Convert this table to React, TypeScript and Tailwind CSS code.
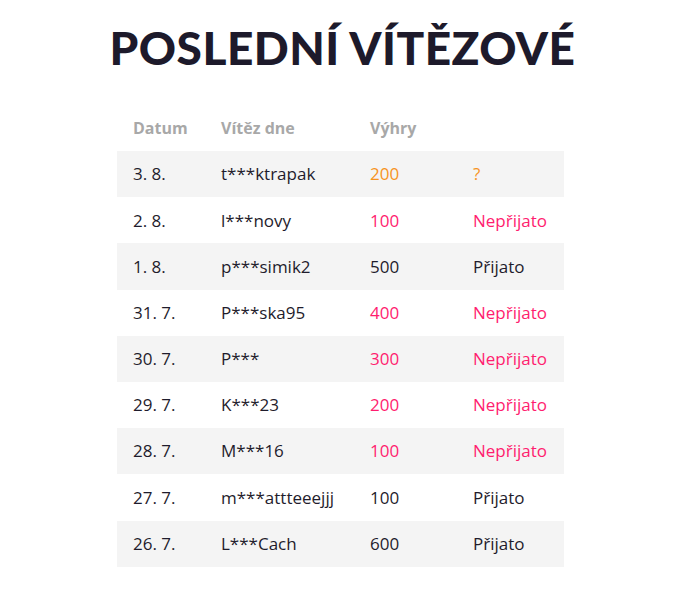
const rows = [
  { date: "3. 8.", name: "t***ktrapak", win: "200", status: "?", tone: "orange" },
  { date: "2. 8.", name: "l***novy", win: "100", status: "Nepřijato", tone: "pink" },
  { date: "1. 8.", name: "p***simik2", win: "500", status: "Přijato", tone: "dark" },
  { date: "31. 7.", name: "P***ska95", win: "400", status: "Nepřijato", tone: "pink" },
  { date: "30. 7.", name: "P***", win: "300", status: "Nepřijato", tone: "pink" },
  { date: "29. 7.", name: "K***23", win: "200", status: "Nepřijato", tone: "pink" },
  { date: "28. 7.", name: "M***16", win: "100", status: "Nepřijato", tone: "pink" },
  { date: "27. 7.", name: "m***attteeejjj", win: "100", status: "Přijato", tone: "dark" },
  { date: "26. 7.", name: "L***Cach", win: "600", status: "Přijato", tone: "dark" },
];

const toneClass: Record<string, string> = {
  orange: "text-[#f7931e]",
  pink: "text-[#ff1d6f]",
  dark: "text-[#1f1c2c]",
};

export default function App() {
  return (
    <div className="flex min-h-[596px] flex-col items-center bg-white font-['Open_Sans','Noto_Sans',sans-serif] text-[#1f1c2c]">
      <h1 className="mt-[23px] font-['Lato',sans-serif] text-[46px] font-black leading-[50px] tracking-[0.01em] text-[#1d1a2b]">
        POSLEDNÍ VÍTĚZOVÉ
      </h1>
      <table className="mr-[4px] mt-[32px] w-[447px] border-collapse text-[17px]">
        <thead>
          <tr className="h-[46px] text-left text-[16px] text-[#a8a8a8]">
            <th className="w-[88px] pl-4 font-bold">Datum</th>
            <th className="w-[149px] pl-4 font-bold">Vítěz dne</th>
            <th className="w-[103px] pl-4 font-bold">Výhry</th>
            <th className="pl-4"></th>
          </tr>
        </thead>
        <tbody>
          {rows.map((r, i) => (
            <tr key={r.date} className={i % 2 === 0 ? "h-[46.2px] bg-[#f4f4f4]" : "h-[46.2px] bg-white"}>
              <td className="pl-4">{r.date}</td>
              <td className="pl-4">{r.name}</td>
              <td className={`pl-4 ${toneClass[r.tone]}`}>{r.win}</td>
              <td className={`pl-4 ${toneClass[r.tone]}`}>{r.status}</td>
            </tr>
          ))}
        </tbody>
      </table>
    </div>
  );
}
